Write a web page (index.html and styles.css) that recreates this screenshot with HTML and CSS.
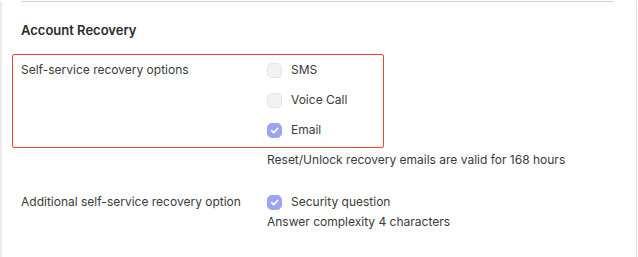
FILE: index.html
```html
<!DOCTYPE html>
<html lang="en">
<head>
    <meta charset="UTF-8">
    <title>Account Recovery</title>
    <link rel="stylesheet" href="styles.css">
</head>
<body>
    <div class="page">
        <section class="section">
            <h2>Account Recovery</h2>

            <div class="recovery-box">
                <div class="row-label">Self-service recovery options</div>
                <div class="options">
                    <label class="option"><span class="check"></span>SMS</label>
                    <label class="option"><span class="check"></span>Voice Call</label>
                    <label class="option"><span class="check checked"><svg viewBox="0 0 14 14"><polyline points="3.8,7.2 6.1,9.4 10.3,4.8"/></svg></span>Email</label>
                </div>
            </div>
            <p class="note indent">Reset/Unlock recovery emails are valid for 168 hours</p>

            <div class="row">
                <div class="row-label">Additional self-service recovery option</div>
                <div class="options">
                    <label class="option"><span class="check checked"><svg viewBox="0 0 14 14"><polyline points="3.8,7.2 6.1,9.4 10.3,4.8"/></svg></span>Security question</label>
                    <p class="note">Answer complexity 4 characters</p>
                </div>
            </div>
        </section>
    </div>
</body>
</html>
```

FILE: styles.css
```css
body {
    margin: 0;
    font-family: Inter, "Noto Sans", Arial, sans-serif;
    font-size: 12px;
    color: #3a3a3a;
    background: #fff;
}

.page {
    width: 637px;
    min-height: 257px;
    box-sizing: border-box;
    border-left: 2px solid #ececec;
    border-right: 1px solid #e2e2e2;
}

.section {
    margin: 1px 22px 0 19px;
    border-top: 1px solid #d2d2d2;
}

.section h2 {
    margin: 19px 0 15px;
    font-size: 13px;
    line-height: 18px;
    font-weight: 600;
    color: #2b2b2b;
}

.recovery-box {
    display: flex;
    margin-left: -9px;
    width: 372px;
    box-sizing: border-box;
    padding: 6px 0 8px 8px;
    border: 1px solid #ea4a2c;
    border-radius: 2px;
}

.row {
    display: flex;
    margin-top: 24px;
}

.row-label {
    width: 246px;
    line-height: 18px;
}

.options {
    display: flex;
    flex-direction: column;
    gap: 12px;
}

.row .options {
    gap: 2px;
}

.option {
    display: flex;
    align-items: center;
    line-height: 18px;
}

.check {
    width: 15px;
    height: 15px;
    box-sizing: border-box;
    margin-right: 9px;
    border: 1px solid #e3e3e3;
    border-radius: 5px;
    background: #f2f2f2;
}

.check.checked {
    border-color: #9ba4f2;
    background: #9ba4f2;
}

.check svg {
    display: block;
    width: 13px;
    height: 13px;
    fill: none;
    stroke: #fff;
    stroke-width: 1.8;
    stroke-linecap: round;
    stroke-linejoin: round;
}

.note {
    margin: 0;
    line-height: 18px;
}

.indent {
    margin: 3px 0 0 246px;
}
```
